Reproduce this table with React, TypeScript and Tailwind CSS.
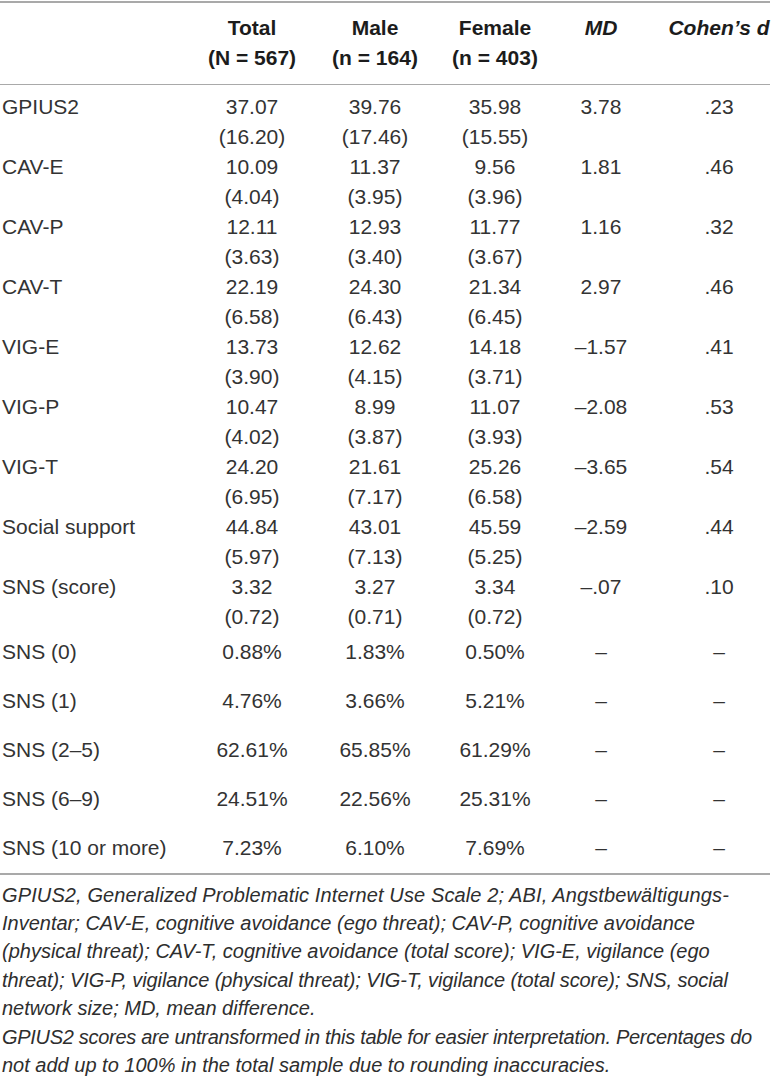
import React from "react";

type Row = {
  label: string;
  vals: [string, string | null][];
  md: string;
  d: string;
};

const meanRows: Row[] = [
  { label: "GPIUS2", vals: [["37.07", "(16.20)"], ["39.76", "(17.46)"], ["35.98", "(15.55)"]], md: "3.78", d: ".23" },
  { label: "CAV-E", vals: [["10.09", "(4.04)"], ["11.37", "(3.95)"], ["9.56", "(3.96)"]], md: "1.81", d: ".46" },
  { label: "CAV-P", vals: [["12.11", "(3.63)"], ["12.93", "(3.40)"], ["11.77", "(3.67)"]], md: "1.16", d: ".32" },
  { label: "CAV-T", vals: [["22.19", "(6.58)"], ["24.30", "(6.43)"], ["21.34", "(6.45)"]], md: "2.97", d: ".46" },
  { label: "VIG-E", vals: [["13.73", "(3.90)"], ["12.62", "(4.15)"], ["14.18", "(3.71)"]], md: "\u20131.57", d: ".41" },
  { label: "VIG-P", vals: [["10.47", "(4.02)"], ["8.99", "(3.87)"], ["11.07", "(3.93)"]], md: "\u20132.08", d: ".53" },
  { label: "VIG-T", vals: [["24.20", "(6.95)"], ["21.61", "(7.17)"], ["25.26", "(6.58)"]], md: "\u20133.65", d: ".54" },
  { label: "Social support", vals: [["44.84", "(5.97)"], ["43.01", "(7.13)"], ["45.59", "(5.25)"]], md: "\u20132.59", d: ".44" },
  { label: "SNS (score)", vals: [["3.32", "(0.72)"], ["3.27", "(0.71)"], ["3.34", "(0.72)"]], md: "\u2013.07", d: ".10" },
];

const pctRows: [string, string, string, string][] = [
  ["SNS (0)", "0.88%", "1.83%", "0.50%"],
  ["SNS (1)", "4.76%", "3.66%", "5.21%"],
  ["SNS (2\u20135)", "62.61%", "65.85%", "61.29%"],
  ["SNS (6\u20139)", "24.51%", "22.56%", "25.31%"],
  ["SNS (10 or more)", "7.23%", "6.10%", "7.69%"],
];

const grid = "grid grid-cols-[190px_124px_122px_118px_94px_121px]";

export default function App() {
  return (
    <div className="w-[772px] bg-white pt-[1px] font-['Liberation_Sans',Arial,sans-serif] text-[#333333]">
      <div className="h-[1.5px] w-[770px] bg-[#a9a9a9]" />
      {/* Header */}
      <div className={`${grid} pt-[10px] pb-[11px] text-[21px] leading-[30px] font-bold text-[#1c1c1c]`}>
        <div />
        <div className="text-center">
          <div>Total</div>
          <div>(N = 567)</div>
        </div>
        <div className="text-center">
          <div>Male</div>
          <div>(n = 164)</div>
        </div>
        <div className="text-center">
          <div>Female</div>
          <div>(n = 403)</div>
        </div>
        <div className="text-center italic">MD</div>
        <div className="pl-[21px] flex justify-center">
          <span className="whitespace-nowrap italic">Cohen’s d</span>
        </div>
      </div>
      <div className="h-[1.5px] w-[770px] bg-[#a9a9a9]" />
      {/* Body */}
      <div className="pt-[7px] text-[21px] leading-[30px]">
        {meanRows.map((r, i) => (
          <div key={r.label} className={`${grid} ${i === meanRows.length - 1 ? "pb-[5px]" : ""}`}>
            <div className="pl-[2px]">{r.label}</div>
            {r.vals.map((v, j) => (
              <div key={j} className="text-center">
                <div>{v[0]}</div>
                <div>{v[1]}</div>
              </div>
            ))}
            <div className="text-center">{r.md}</div>
            <div className="pl-[21px] text-center">{r.d}</div>
          </div>
        ))}
        {pctRows.map((r, i) => (
          <div key={r[0]} className={`${grid} ${i === pctRows.length - 1 ? "pb-[10px]" : "pb-[19px]"}`}>
            <div className="pl-[2px] whitespace-nowrap">{r[0]}</div>
            <div className="text-center">{r[1]}</div>
            <div className="text-center">{r[2]}</div>
            <div className="text-center">{r[3]}</div>
            <div className="text-center">{"\u2013"}</div>
            <div className="pl-[21px] text-center">{"\u2013"}</div>
          </div>
        ))}
      </div>
      <div className="h-[1.5px] w-[770px] bg-[#a9a9a9]" />
      {/* Footer */}
      <div className="pt-[6px] pl-[2px] text-[20px] leading-[28.4px] italic text-[#2e2e2e]">
        <div className="whitespace-nowrap tracking-[0.12px]">
          GPIUS2, Generalized Problematic Internet Use Scale 2; ABI, Angstbewältigungs-
        </div>
        <div className="whitespace-nowrap">
          Inventar; CAV-E, cognitive avoidance (ego threat); CAV-P, cognitive avoidance
        </div>
        <div className="whitespace-nowrap">
          (physical threat); CAV-T, cognitive avoidance (total score); VIG-E, vigilance (ego
        </div>
        <div className="whitespace-nowrap tracking-[-0.1px]">
          threat); VIG-P, vigilance (physical threat); VIG-T, vigilance (total score); SNS, social
        </div>
        <div className="whitespace-nowrap">network size; MD, mean difference.</div>
        <div className="whitespace-nowrap tracking-[-0.3px]">
          GPIUS2 scores are untransformed in this table for easier interpretation. Percentages do
        </div>
        <div className="whitespace-nowrap">
          not add up to 100% in the total sample due to rounding inaccuracies.
        </div>
      </div>
    </div>
  );
}
